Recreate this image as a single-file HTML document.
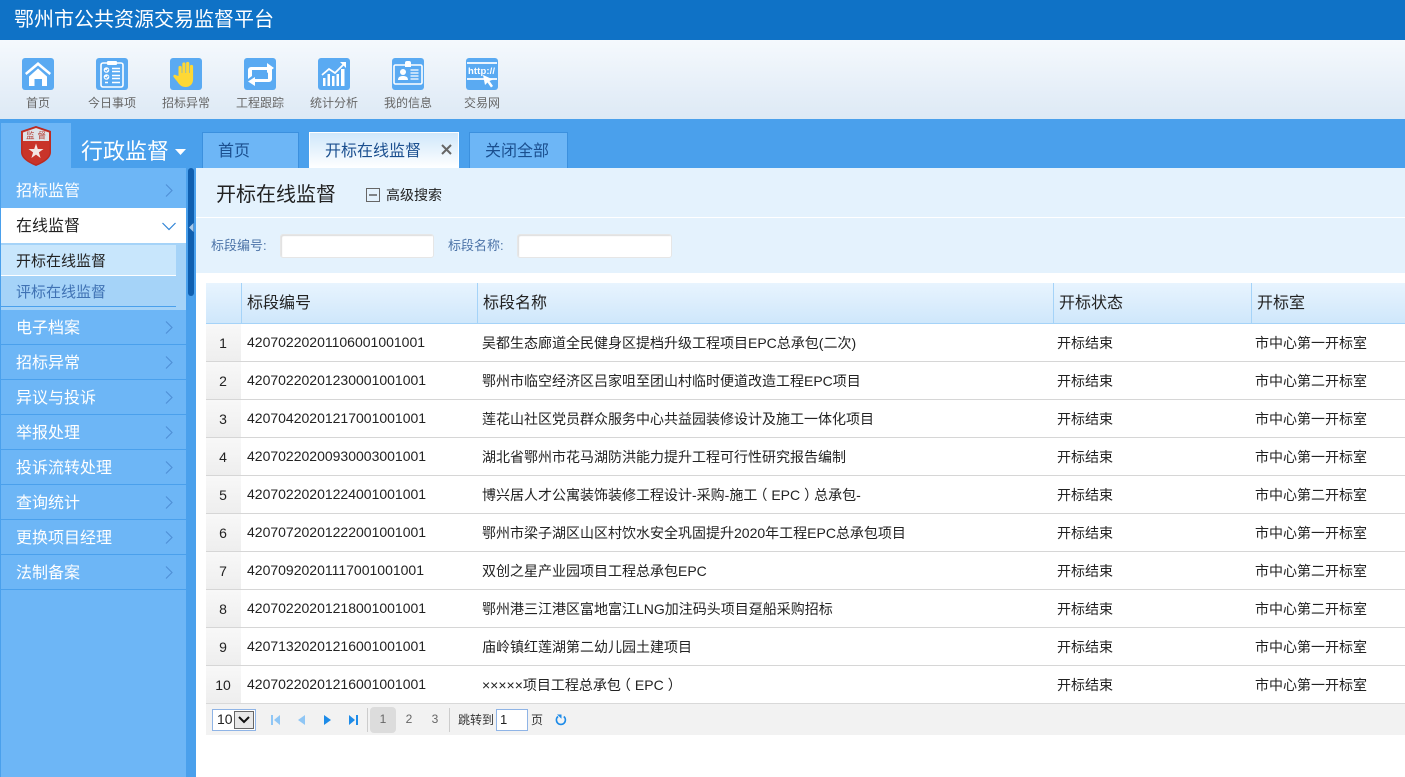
<!DOCTYPE html>
<html lang="zh-CN">
<head>
<meta charset="utf-8">
<title>鄂州市公共资源交易监督平台</title>
<style>
*{box-sizing:border-box;margin:0;padding:0}
html,body{width:1405px;height:777px;overflow:hidden;background:#fff}
body{font-family:"Liberation Sans","Noto Sans CJK SC",sans-serif;position:relative;color:#222}
.a{position:absolute;white-space:nowrap}
#hd{left:0;top:0;width:1405px;height:40px;background:#0f72c6;color:#fff;font-size:20px;line-height:40px;padding-left:14px}
#tb{left:0;top:40px;width:1405px;height:79px;background:linear-gradient(#f5f9fd,#dde9f5)}
.ic{position:absolute;top:58px;width:32px;height:32px}
.lb{position:absolute;top:95px;width:74px;text-align:center;font-size:12px;line-height:17px;color:#666}
#bar{left:0;top:119px;width:1405px;height:49px;background:#4aa0ec}
#lg{left:1px;top:123px;width:70px;height:45px;background:#6db6f6}
#xz{left:81px;top:137px;font-size:22px;line-height:30px;color:#fff}
.tab{position:absolute;top:132px;height:36px;font-size:16px;line-height:38px;color:#1b4f8f;background:#6db6f6;border:1px solid #3b90de;border-bottom:0;padding-left:15px}
#side{left:0;top:168px;width:186px;height:609px;background:#6db6f6;border-left:1px solid #4aa0ec}
.m{position:absolute;left:1px;width:185px;height:35px;font-size:16px;line-height:38px;padding-left:15px;color:#fff;border-bottom:1px solid #4aa0ec}
.m svg{position:absolute;left:164px;top:11px}
#spl{left:186px;top:168px;width:10px;height:609px;background:#4aa0ec}
#spb{left:188px;top:168px;width:6px;height:128px;background:#0f5fb0;border-radius:3px}
#ttl{left:196px;top:168px;width:1209px;height:49px;background:#e4f2fd}
#srch{left:196px;top:218px;width:1209px;height:55px;background:#e4f2fd}
#ln{left:196px;top:217px;width:1209px;height:1px;background:#fff}
.sl{position:absolute;font-size:13px;line-height:18px;color:#4d74a8;top:237px}
.inp{position:absolute;top:234px;height:24px;background:#fff;border:1px solid #e6e6e6;border-radius:3px;box-shadow:inset 1px 1px 1px #ddd}
#th{left:206px;top:283px;width:1199px;height:41px;background:linear-gradient(#e8f4fe,#cfe7fb);border-bottom:1px solid #a5d3f8}
.hs{position:absolute;top:283px;width:1px;height:40px;background:#a5d3f8}
.ht{position:absolute;top:283px;height:40px;line-height:42px;font-size:16px;color:#222}
.r{position:absolute;left:206px;width:1199px;height:38px;border-bottom:1px solid #d6d6d6;font-size:14px;color:#222}
.r span{position:absolute;top:0;line-height:38px;white-space:nowrap}
.r i{font-style:normal;position:relative}
.r .n{left:0;width:35px;height:37px;background:linear-gradient(#f8f8f8,#eeeeee);text-align:center;padding-right:1px}
.r .c{left:41px;top:-1px}
.r .d{left:276px}
.r .s{left:851px}
.r .o{left:1049px}
#pg{left:206px;top:703px;width:1199px;height:32px;background:#f2f2f2;border-top:1px solid #d9d9d9}
.pn{position:absolute;top:708px;height:25px;line-height:23px;width:26px;text-align:center;font-size:12px;color:#666}
</style>
</head>
<body>
<div class="a" id="hd">鄂州市公共资源交易监督平台</div>
<div class="a" id="tb"></div>

<svg class="ic" style="left:22px" viewBox="0 0 32 32"><rect width="32" height="32" rx="3" fill="#5aaaf2"/><path d="M3 15 16 4 29 15 27.500 17 16 7.500 4.500 17Z" fill="#fff"/><path d="M7 18.500 16 10.500 25 18.500V28H20V21H12.500V28H7Z" fill="#fff"/></svg>
<svg class="ic" style="left:96px" viewBox="0 0 32 32"><rect width="32" height="32" rx="3" fill="#5aaaf2"/><rect x="5" y="5" width="22" height="24" rx="2" fill="none" stroke="#fff" stroke-width="1.600"/><rect x="11" y="3" width="10" height="4" rx="1" fill="#fff"/><circle cx="10.500" cy="12" r="2.800" fill="#fff"/><circle cx="10.500" cy="19" r="2.800" fill="#fff"/><path d="M9 12l1.200 1.200 2-2.200M9 19l1.200 1.200 2-2.200" stroke="#5aaaf2" stroke-width="1" fill="none"/><path d="M16 10.500h8M16 13.500h8M16 17.500h8M16 20.500h8M9 24.500h3M16 24.500h8" stroke="#fff" stroke-width="1.400"/></svg>
<svg class="ic" style="left:170px" viewBox="0 0 32 32"><rect width="32" height="32" rx="3" fill="#5aaaf2"/><path d="M8.500 18V9.500a1.600 1.600 0 0 1 3.200 0V15h.6V6a1.600 1.600 0 0 1 3.200 0V15h.6V5.500a1.600 1.600 0 0 1 3.200 0V15h.6V8.500a1.600 1.600 0 0 1 3.200 0V21c0 5-3 8-7.500 8-4 0-6-2-8-5l-4-5c-1-1.600 1-3 2.400-1.800Z" fill="#fdd835"/></svg>
<svg class="ic" style="left:244px" viewBox="0 0 32 32"><rect width="32" height="32" rx="3" fill="#5aaaf2"/><path d="M4 21V12a3 3 0 0 1 3-3H23V5L30 10 23 15V12H8V18Z" fill="#fff"/><path d="M28 11V21a3 3 0 0 1-3 3H11V28L4 23.500 11 19V21H24V14Z" fill="#fff"/></svg>
<svg class="ic" style="left:318px" viewBox="0 0 32 32"><rect width="32" height="32" rx="3" fill="#5aaaf2"/><path d="M4 17 11 11 17 15 26 6" fill="none" stroke="#fff" stroke-width="1.800"/><path d="M22 4h6v6Z" fill="#fff"/><path d="M5 20h2.500v8H5ZM9.500 16h2.500v12H9.500ZM14 18h2.500v10H14ZM18.500 16h2.500v12H18.500ZM23 11h3.500v17H23Z" fill="#fff"/></svg>
<svg class="ic" style="left:392px" viewBox="0 0 32 32"><rect width="32" height="32" rx="3" fill="#5aaaf2"/><rect x="2" y="7" width="28" height="19" rx="1.500" fill="none" stroke="#fff" stroke-width="1.600"/><path d="M13 7V5a2 2 0 0 1 2-2h2a2 2 0 0 1 2 2v2v2H13Z" fill="#fff"/><circle cx="11" cy="14" r="3" fill="#fff"/><path d="M6 22c0-3 2-4 5-4s5 1 5 4Z" fill="#fff"/><path d="M18.500 12h8M18.500 15h8M18.500 18h8M18.500 21h8" stroke="#fff" stroke-width="1.200"/></svg>
<svg class="ic" style="left:466px" viewBox="0 0 32 32"><rect width="32" height="32" rx="3" fill="#5aaaf2"/><path d="M1 5h30M1 21h30" stroke="#fff" stroke-width="1.700"/><text x="2" y="16" font-family="Liberation Sans" font-weight="700" font-size="9.500" fill="#fff" textLength="27">http://</text><path d="M17 17 27 21.500 23.500 23 27 28 25 29.500 21.500 24.500 19 27Z" fill="#fff"/></svg>

<div class="lb" style="left:1px">首页</div>
<div class="lb" style="left:75px">今日事项</div>
<div class="lb" style="left:149px">招标异常</div>
<div class="lb" style="left:223px">工程跟踪</div>
<div class="lb" style="left:297px">统计分析</div>
<div class="lb" style="left:371px">我的信息</div>
<div class="lb" style="left:445px">交易网</div>

<div class="a" id="bar"></div>
<div class="a" id="lg"></div>
<svg class="a" style="left:20px;top:125px" width="32" height="42" viewBox="0 0 32 42"><path d="M16 1 31 6V27C31 34 23 38 16 41 9 38 1 34 1 27V6Z" fill="#c9342a"/><path d="M16 3 29 7.500V16H3V7.500Z" fill="#dfe3e8"/><path d="M16 1.800 30.200 6.500V27C30.200 33.500 22.500 37.500 16 40.200 9.500 37.500 1.800 33.500 1.800 27V6.500Z" fill="none" stroke="#b92a22" stroke-width="1.200"/><path d="M16 18.500 17.800 24H23.500L18.900 27.400 20.600 33 16 29.600 11.400 33 13.100 27.400 8.500 24H14.200Z" fill="#f4e6e4"/><text x="6" y="13.500" font-size="8.500" fill="#b5423a" font-family="Noto Sans CJK SC">监</text><text x="17.500" y="13.500" font-size="8.500" fill="#b5423a" font-family="Noto Sans CJK SC">督</text></svg>
<div class="a" id="xz">行政监督</div>
<svg class="a" style="left:175px;top:149px" width="11" height="7"><path d="M0 0H11L5.500 6Z" fill="#fff"/></svg>

<div class="tab" style="left:202px;width:97px">首页</div>
<div class="tab" style="left:309px;width:150px;background:linear-gradient(#cfe7fb,#fff);border:1px solid #fff;border-bottom:0">开标在线监督</div>
<svg class="a" style="left:441px;top:144px" width="11" height="11"><path d="M1 1 10 10M10 1 1 10" stroke="#666" stroke-width="2"/></svg>
<div class="tab" style="left:469px;width:99px">关闭全部</div>

<div class="a" id="side"></div>
<div class="m" style="top:173px;border:0">招标监管<svg width="8" height="13" viewBox="0 0 8 13"><path d="M1 .5 7 6.500 1 12.500" fill="none" stroke="#4f8fd6" stroke-width="1.100"/></svg></div>
<div class="m" style="top:208px;background:#fff;color:#222;border:0">在线监督<svg style="left:161px;top:14px" width="14" height="9" viewBox="0 0 14 9"><path d="M.5 1 7 7.500 13.500 1" fill="none" stroke="#2f83d6" stroke-width="1.200"/></svg></div>
<div class="a" style="left:1px;top:243px;width:185px;height:67px;background:#a5d3f8"></div>
<div class="a" style="left:1px;top:245px;width:175px;height:30px;background:#c8e6fc;font-size:15px;line-height:34px;padding-left:15px;color:#222;overflow:hidden">开标在线监督</div>
<div class="a" style="left:1px;top:275px;width:175px;height:1px;background:#fff"></div>
<div class="a" style="left:1px;top:276px;width:175px;height:30px;font-size:15px;line-height:34px;padding-left:15px;color:#3f72b4;overflow:hidden">评标在线监督</div>
<div class="a" style="left:1px;top:306px;width:175px;height:1px;background:#4aa0ec"></div>
<div class="m" style="top:310px">电子档案<svg width="8" height="13" viewBox="0 0 8 13"><path d="M1 .5 7 6.500 1 12.500" fill="none" stroke="#4f8fd6" stroke-width="1.100"/></svg></div>
<div class="m" style="top:345px">招标异常<svg width="8" height="13" viewBox="0 0 8 13"><path d="M1 .5 7 6.500 1 12.500" fill="none" stroke="#4f8fd6" stroke-width="1.100"/></svg></div>
<div class="m" style="top:380px">异议与投诉<svg width="8" height="13" viewBox="0 0 8 13"><path d="M1 .5 7 6.500 1 12.500" fill="none" stroke="#4f8fd6" stroke-width="1.100"/></svg></div>
<div class="m" style="top:415px">举报处理<svg width="8" height="13" viewBox="0 0 8 13"><path d="M1 .5 7 6.500 1 12.500" fill="none" stroke="#4f8fd6" stroke-width="1.100"/></svg></div>
<div class="m" style="top:450px">投诉流转处理<svg width="8" height="13" viewBox="0 0 8 13"><path d="M1 .5 7 6.500 1 12.500" fill="none" stroke="#4f8fd6" stroke-width="1.100"/></svg></div>
<div class="m" style="top:485px">查询统计<svg width="8" height="13" viewBox="0 0 8 13"><path d="M1 .5 7 6.500 1 12.500" fill="none" stroke="#4f8fd6" stroke-width="1.100"/></svg></div>
<div class="m" style="top:520px">更换项目经理<svg width="8" height="13" viewBox="0 0 8 13"><path d="M1 .5 7 6.500 1 12.500" fill="none" stroke="#4f8fd6" stroke-width="1.100"/></svg></div>
<div class="m" style="top:555px">法制备案<svg width="8" height="13" viewBox="0 0 8 13"><path d="M1 .5 7 6.500 1 12.500" fill="none" stroke="#4f8fd6" stroke-width="1.100"/></svg></div>

<div class="a" id="spl"></div>
<div class="a" id="spb"></div>
<svg class="a" style="left:189px;top:223px" width="5" height="9"><path d="M4.500 0V9L0 4.500Z" fill="#a8c8e8"/></svg>

<div class="a" id="ttl"></div>
<div class="a" id="ln"></div>
<div class="a" id="srch"></div>
<div class="a" style="left:216px;top:180px;font-size:20px;line-height:30px;color:#222">开标在线监督</div>
<svg class="a" style="left:366px;top:188px" width="14" height="15"><rect x=".5" y=".5" width="13" height="13" fill="none" stroke="#666"/><path d="M3 7H11" stroke="#555" stroke-width="1.400"/></svg>
<div class="a" style="left:386px;top:185px;font-size:14px;line-height:20px;color:#222">高级搜索</div>
<div class="sl" style="left:211px">标段编号:</div>
<div class="inp" style="left:280px;width:154px"></div>
<div class="sl" style="left:448px">标段名称:</div>
<div class="inp" style="left:517px;width:155px"></div>

<div class="a" id="th"></div>
<div class="hs" style="left:241px"></div>
<div class="hs" style="left:477px"></div>
<div class="hs" style="left:1053px"></div>
<div class="hs" style="left:1251px"></div>
<div class="ht" style="left:247px">标段编号</div>
<div class="ht" style="left:483px">标段名称</div>
<div class="ht" style="left:1059px">开标状态</div>
<div class="ht" style="left:1257px">开标室</div>

<div class="r" style="top:324px"><span class="n">1</span><span class="c">42070220201106001001001</span><span class="d">吴都生态廊道全民健身区提档升级工程项目EPC总承包(二次)</span><span class="s">开标结束</span><span class="o">市中心第一开标室</span></div>
<div class="r" style="top:362px"><span class="n">2</span><span class="c">42070220201230001001001</span><span class="d">鄂州市临空经济区吕家咀至团山村临时便道改造工程EPC项目</span><span class="s">开标结束</span><span class="o">市中心第二开标室</span></div>
<div class="r" style="top:400px"><span class="n">3</span><span class="c">42070420201217001001001</span><span class="d">莲花山社区党员群众服务中心共益园装修设计及施工一体化项目</span><span class="s">开标结束</span><span class="o">市中心第一开标室</span></div>
<div class="r" style="top:438px"><span class="n">4</span><span class="c">42070220200930003001001</span><span class="d">湖北省鄂州市花马湖防洪能力提升工程可行性研究报告编制</span><span class="s">开标结束</span><span class="o">市中心第一开标室</span></div>
<div class="r" style="top:476px"><span class="n">5</span><span class="c">42070220201224001001001</span><span class="d">博兴居人才公寓装饰装修工程设计-采购-施工<i style="left:-4px">（</i>EPC<i style="left:4px">）</i>总承包-</span><span class="s">开标结束</span><span class="o">市中心第二开标室</span></div>
<div class="r" style="top:514px"><span class="n">6</span><span class="c">42070720201222001001001</span><span class="d">鄂州市梁子湖区山区村饮水安全巩固提升2020年工程EPC总承包项目</span><span class="s">开标结束</span><span class="o">市中心第一开标室</span></div>
<div class="r" style="top:552px"><span class="n">7</span><span class="c">42070920201117001001001</span><span class="d">双创之星产业园项目工程总承包EPC</span><span class="s">开标结束</span><span class="o">市中心第二开标室</span></div>
<div class="r" style="top:590px"><span class="n">8</span><span class="c">42070220201218001001001</span><span class="d">鄂州港三江港区富地富江LNG加注码头项目趸船采购招标</span><span class="s">开标结束</span><span class="o">市中心第二开标室</span></div>
<div class="r" style="top:628px"><span class="n">9</span><span class="c">42071320201216001001001</span><span class="d">庙岭镇红莲湖第二幼儿园土建项目</span><span class="s">开标结束</span><span class="o">市中心第一开标室</span></div>
<div class="r" style="top:666px"><span class="n">10</span><span class="c">42070220201216001001001</span><span class="d">×××××项目工程总承包<i style="left:-4px">（</i>EPC<i style="left:4px">）</i></span><span class="s">开标结束</span><span class="o">市中心第一开标室</span></div>

<div class="a" id="pg"></div>
<div class="a" style="left:212px;top:709px;width:44px;height:22px;background:#fff;border:1px solid #8fb4e6;font-size:14px;line-height:19px;padding-left:4px">10</div>
<div class="a" style="left:234px;top:711px;width:20px;height:18px;background:#e8e8e8;border:1px solid #666"></div>
<svg class="a" style="left:238px;top:716px" width="12" height="8"><path d="M1 1 6 6 11 1" fill="none" stroke="#111" stroke-width="2"/></svg>
<svg class="a" style="left:270px;top:714px" width="12" height="12"><path d="M1 1H3V11H1ZM10 1V11L4 6Z" fill="#8fc6f5"/></svg>
<svg class="a" style="left:297px;top:714px" width="10" height="12"><path d="M8 1V11L1 6Z" fill="#8fc6f5"/></svg>
<svg class="a" style="left:322px;top:714px" width="10" height="12"><path d="M2 1V11L9 6Z" fill="#1d8be8"/></svg>
<svg class="a" style="left:348px;top:714px" width="12" height="12"><path d="M1 1V11L7 6ZM8 1H10V11H8Z" fill="#1d8be8"/></svg>
<div class="a" style="left:367px;top:708px;width:1px;height:24px;background:#ccc"></div>
<div class="a" style="left:370px;top:707px;width:26px;height:26px;background:#dcdcdc;border-radius:4px"></div>
<div class="pn" style="left:370px">1</div>
<div class="pn" style="left:396px">2</div>
<div class="pn" style="left:422px">3</div>
<div class="a" style="left:449px;top:708px;width:1px;height:24px;background:#ccc"></div>
<div class="a" style="left:458px;top:712px;font-size:12px;line-height:17px;color:#333">跳转到</div>
<div class="a" style="left:496px;top:709px;width:32px;height:22px;background:#fff;border:1px solid #8fb4e6;font-size:13px;line-height:19px;padding-left:3px">1</div>
<div class="a" style="left:531px;top:712px;font-size:12px;line-height:17px;color:#333">页</div>
<svg class="a" style="left:555px;top:714px" width="12" height="12" viewBox="0 0 12 12"><path d="M8.800 2.500A4.500 4.500 0 1 1 3 2.500" fill="none" stroke="#1d8be8" stroke-width="1.600"/><path d="M2 .5H6.500V4.800Z" fill="#1d8be8"/></svg>
</body>
</html>
